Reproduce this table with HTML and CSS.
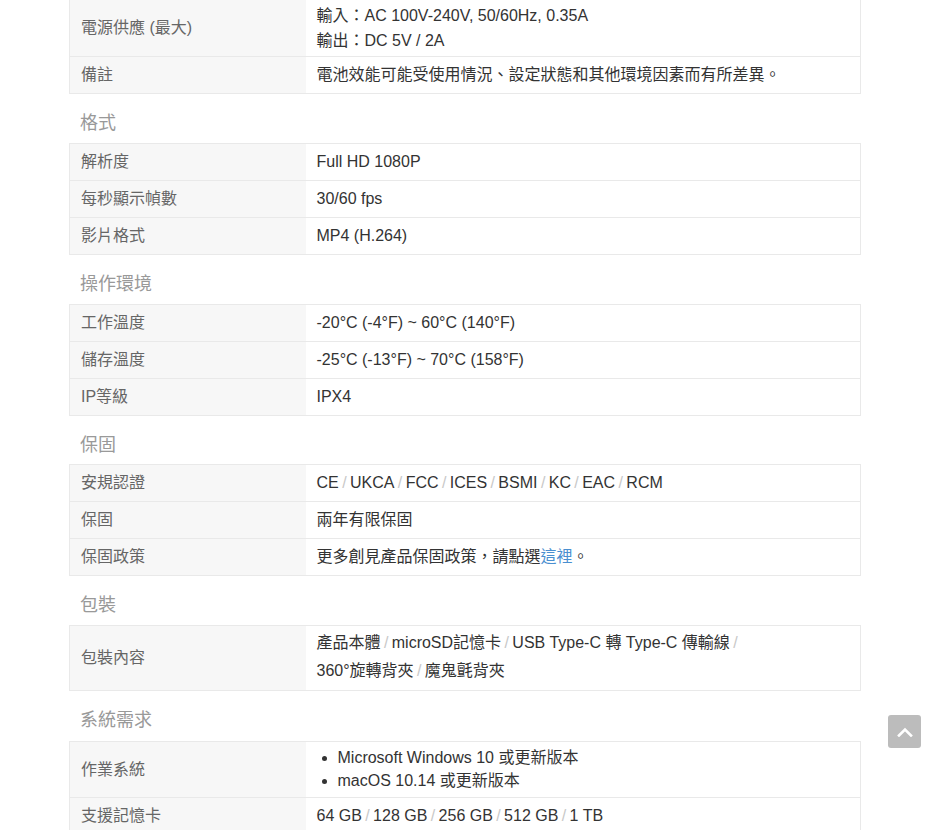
FILE: index.html
```html
<!DOCTYPE html>
<html lang="zh-Hant">
<head>
<meta charset="utf-8">
<title>規格</title>
<link rel="stylesheet" href="styles.css">
</head>
<body>
<div class="spec">
  <table class="spec-table first">
    <colgroup><col class="col-label"><col></colgroup>
    <tr class="multi">
      <th>電源供應 (最大)</th>
      <td>輸入：AC 100V-240V, 50/60Hz, 0.35A<br>輸出：DC 5V / 2A</td>
    </tr>
    <tr>
      <th>備註</th>
      <td>電池效能可能受使用情況、設定狀態和其他環境因素而有所差異。</td>
    </tr>
  </table>

  <h3 class="spec-title">格式</h3>
  <table class="spec-table">
    <colgroup><col class="col-label"><col></colgroup>
    <tr><th>解析度</th><td>Full HD 1080P</td></tr>
    <tr><th>每秒顯示幀數</th><td>30/60 fps</td></tr>
    <tr><th>影片格式</th><td>MP4 (H.264)</td></tr>
  </table>

  <h3 class="spec-title">操作環境</h3>
  <table class="spec-table">
    <colgroup><col class="col-label"><col></colgroup>
    <tr><th>工作溫度</th><td>-20°C (-4°F) ~ 60°C (140°F)</td></tr>
    <tr><th>儲存溫度</th><td>-25°C (-13°F) ~ 70°C (158°F)</td></tr>
    <tr><th>IP等級</th><td>IPX4</td></tr>
  </table>

  <h3 class="spec-title tight">保固</h3>
  <table class="spec-table">
    <colgroup><col class="col-label"><col></colgroup>
    <tr><th>安規認證</th><td>CE<span class="sep">/</span>UKCA<span class="sep">/</span>FCC<span class="sep">/</span>ICES<span class="sep">/</span>BSMI<span class="sep">/</span>KC<span class="sep">/</span>EAC<span class="sep">/</span>RCM</td></tr>
    <tr><th>保固</th><td>兩年有限保固</td></tr>
    <tr><th>保固政策</th><td>更多創見產品保固政策，請點選<a href="#" class="link">這裡</a>。</td></tr>
  </table>

  <h3 class="spec-title">包裝</h3>
  <table class="spec-table">
    <colgroup><col class="col-label"><col></colgroup>
    <tr class="multi pack"><th>包裝內容</th><td>產品本體<span class="sep">/</span>microSD記憶卡<span class="sep">/</span>USB Type-C 轉 Type-C 傳輸線<span class="sep">/</span><br>360°旋轉背夾<span class="sep">/</span>魔鬼氈背夾</td></tr>
  </table>

  <h3 class="spec-title loose">系統需求</h3>
  <table class="spec-table">
    <colgroup><col class="col-label"><col></colgroup>
    <tr class="multi os"><th>作業系統</th><td><ul class="os-list"><li>Microsoft Windows 10 或更新版本</li><li>macOS 10.14 或更新版本</li></ul></td></tr>
    <tr><th>支援記憶卡</th><td>64 GB<span class="sep">/</span>128 GB<span class="sep">/</span>256 GB<span class="sep">/</span>512 GB<span class="sep">/</span>1 TB</td></tr>
  </table>
</div>

<a href="#" class="back-top" aria-label="回到頂端">
  <svg width="16" height="10" viewBox="0 0 16 10"><path d="M2 8.5 L8 2.5 L14 8.5" fill="none" stroke="#fff" stroke-width="2.6" stroke-linecap="square"/></svg>
</a>
</body>
</html>
```

FILE: styles.css
```css
html, body {
  margin: 0;
  padding: 0;
  background: #fff;
}
body {
  font-family: "Liberation Sans", Arial, "Noto Sans CJK TC", sans-serif;
  font-size: 16px;
  color: #333;
  overflow: hidden;
}
.spec {
  width: 792px;
  padding-left: 69px;
}
.spec-table {
  width: 100%;
  table-layout: fixed;
  border-collapse: collapse;
  border: 1px solid #e9e9e9;
}
.col-label {
  width: 236px;
}
.spec-table.first {
  margin-top: -2px;
}
.spec-table th,
.spec-table td {
  border-top: 1px solid #e9e9e9;
  border-bottom: 1px solid #e9e9e9;
  padding: 8px 11px;
  line-height: 20px;
  text-align: left;
  vertical-align: middle;
}
.spec-table th {
  background: #f7f7f7;
  font-weight: normal;
  color: #666;
}
.spec-table td {
  color: #333;
  background: #fff;
}
.spec-table tr.multi td {
  line-height: 25px;
  padding-top: 4px;
  padding-bottom: 3px;
}
.spec-table tr.pack td {
  line-height: 28px;
  padding-top: 3px;
  padding-bottom: 5px;
}
.spec-table tr.os td {
  line-height: 23px;
  padding-top: 4px;
  padding-bottom: 5px;
}
.spec-title {
  margin: 0;
  padding: 17px 11px 8px;
  font-size: 18px;
  line-height: 24px;
  font-weight: normal;
  color: #999;
}
.spec-title.tight {
  padding-bottom: 7px;
}
.spec-title.loose {
  padding-bottom: 9px;
}
.sep {
  color: #c8c8c8;
  padding: 0 3.4px;
}
.link {
  color: #4a8fd0;
  text-decoration: none;
}
.os-list {
  margin: 0;
  padding-left: 21px;
}
.os-list li {
  list-style: disc;
}
.back-top {
  position: fixed;
  left: 888px;
  top: 715px;
  width: 33px;
  height: 33px;
  border-radius: 3px;
  background: #bcbcbc;
  display: flex;
  align-items: center;
  justify-content: center;
}
```
